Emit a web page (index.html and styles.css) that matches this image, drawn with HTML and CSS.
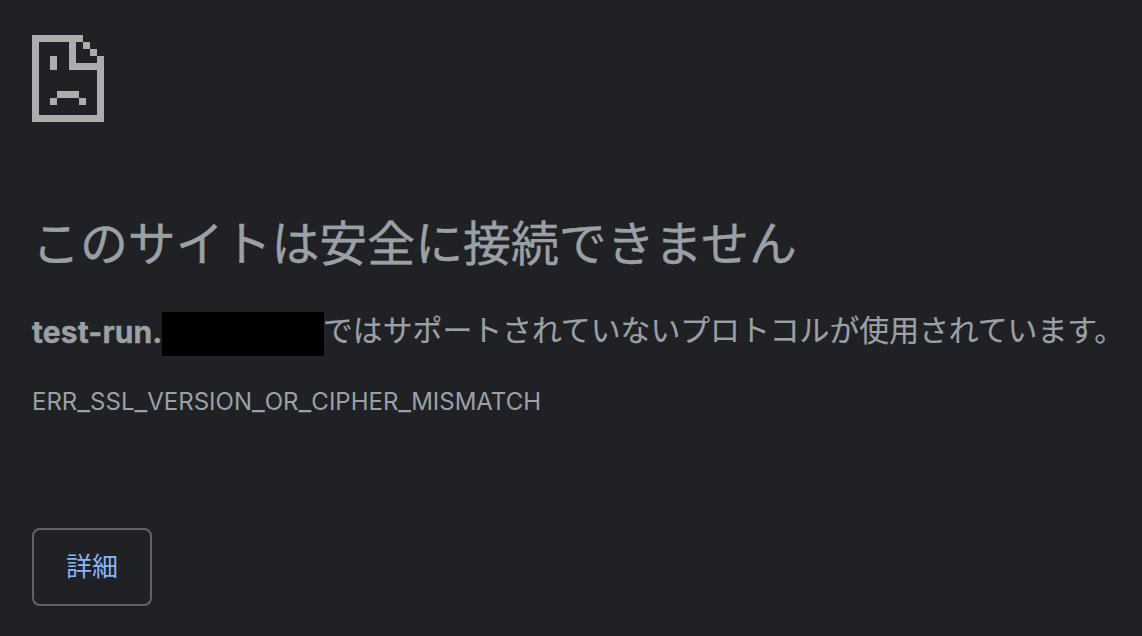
FILE: index.html
```
<!DOCTYPE html>
<html lang="ja">
<head>
  <meta charset="UTF-8" />
  <meta name="viewport" content="width=device-width, initial-scale=1.0"/>
  <title>このサイトは安全に接続できません</title>
  <link rel="stylesheet" href="styles.css">
</head>
<body>
  <main class="error-page">
    <svg class="icon" viewBox="0 0 72 87" shape-rendering="crispEdges" aria-hidden="true">
      <path d="M0 0h51v7H44v21h21V21h7v66H0zM7 7v73h58V35H37V7z" fill-rule="evenodd"/>
      <path d="M51 7h7v7h-7zM58 14h7v7h-7zM18 21h7v14h-7zM25 56h22v7H25zM18 63h7v7h-7zM47 63h7v7h-7z"/>
    </svg>
    <h1>このサイトは安全に接続できません</h1>
    <p class="message"><strong class="host">test-run.</strong><span class="redacted"></span><span class="detail">ではサポートされていないプロトコルが使用されています。</span></p>
    <p class="error-code">ERR<span>_</span>SSL<span>_</span>VERSION<span>_</span>OR<span>_</span>CIPHER<span>_</span>MISMATCH</p>
    <button class="details-button">詳細</button>
  </main>
</body>
</html>
```

FILE: styles.css
```
* {
  box-sizing: border-box;
  margin: 0;
  padding: 0;
}

body {
  background: #202124;
  color: #9aa0a6;
  font-family: Inter, "Noto Sans CJK JP", sans-serif;
  overflow: hidden;
}

.error-page {
  display: flex;
  flex-direction: column;
  align-items: flex-start;
  padding: 35px 0 0 32px;
}

.icon {
  width: 72px;
  height: 87px;
  fill: #acacac;
}

h1 {
  margin-top: 93px;
  font-size: 47.9px;
  font-weight: 400;
  line-height: 58px;
  white-space: nowrap;
  -webkit-text-stroke: 0.4px #9aa0a6;
}

.message {
  display: flex;
  align-items: center;
  height: 44px;
  margin-top: 39px;
  font-size: 29.85px;
  line-height: 44px;
  white-space: nowrap;
}

.host {
  width: 130px;
  height: 44px;
  font-size: 30px;
  font-weight: 700;
  line-height: 40px;
  letter-spacing: 0.1px;
  -webkit-text-stroke: 0.4px #9aa0a6;
}

.redacted {
  width: 162px;
  height: 44px;
  background: #000;
}

.detail {
  height: 44px;
  margin-left: -1px;
  line-height: 37px;
  -webkit-text-stroke: 0.2px #9aa0a6;
}

.error-code {
  height: 32px;
  margin-top: 30px;
  font-size: 24px;
  line-height: 32px;
  white-space: nowrap;
}

/* wider underscores between the words */
.error-code span {
  font-size: 28px;
  line-height: 1;
}

.details-button {
  width: 120px;
  height: 78px;
  margin-top: 110px;
  padding-bottom: 5px;
  background: transparent;
  border: 2px solid #5f6368;
  border-radius: 8px;
  color: #8ab4f8;
  font-family: inherit;
  font-size: 26px;
  cursor: pointer;
}
```
